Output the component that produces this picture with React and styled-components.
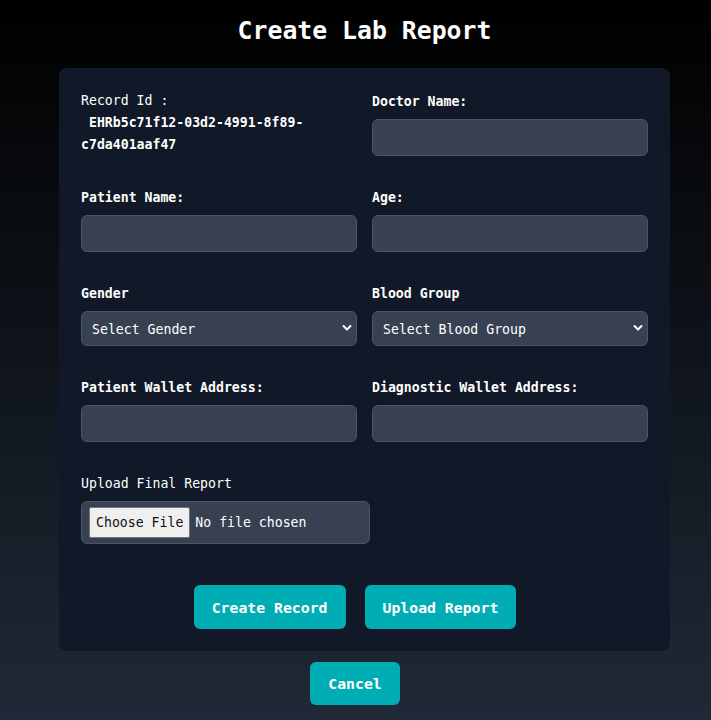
import React from "react";
import styled, { createGlobalStyle } from "styled-components";

const GlobalStyle = createGlobalStyle`
  html, body { margin: 0; padding: 0; }
  body {
    min-height: 720px;
    background: linear-gradient(to bottom, #000000 0%, #1f2937 100%);
    font-family: "DejaVu Sans Mono", "Liberation Mono", monospace;
    color: #ffffff;
  }
  * { box-sizing: border-box; }
`;

const Page = styled.div`
  min-height: 720px;
  padding: 13px 0 15px 18px;
  display: flex;
  flex-direction: column;
  align-items: center;
`;

const Title = styled.h1`
  margin: 0 0 19px;
  font-size: 24.8px;
  line-height: 36px;
  font-weight: 700;
  color: #ffffff;
`;

const Card = styled.form`
  width: 611px;
  padding: 22px;
  background: #111827;
  border-radius: 8px;
`;

const Grid = styled.div`
  display: grid;
  grid-template-columns: minmax(0, 1fr) minmax(0, 1fr);
  column-gap: 15px;
  row-gap: 30px;
`;

const Field = styled.div`
  display: flex;
  flex-direction: column;
  position: relative;
`;

const Label = styled.label`
  font-size: 13.2px;
  line-height: 20px;
  padding-top: 2px;
  font-weight: ${(p) => (p.$bold ? 700 : 400)};
  color: #ffffff;
  margin-bottom: 7px;
`;

const RecordText = styled.p`
  margin: 0;
  font-size: 13.2px;
  line-height: 22px;
  color: #ffffff;
`;

const RecordValue = styled.span`
  display: block;
  font-weight: 700;
`;

const TextInput = styled.input`
  height: 37px;
  width: 100%;
  background: #374151;
  border: 1px solid #4b5563;
  border-radius: 6px;
  color: #ffffff;
  font-family: inherit;
  font-size: 13.2px;
  padding: 0 10px;
  outline: none;
`;

const SelectWrap = styled.div`
  position: relative;
`;

const Select = styled.select`
  appearance: none;
  -webkit-appearance: none;
  width: 100%;
  height: 35px;
  background: #374151;
  border: 1px solid #4b5563;
  border-radius: 6px;
  color: #ffffff;
  font-family: "DejaVu Sans Mono", "Liberation Mono", monospace;
  font-size: 13.2px;
  padding: 1px 10px 0;
  outline: none;
`;

const Chevron = styled.svg`
  position: absolute;
  right: 5px;
  top: 13px;
  width: 10px;
  height: 8px;
  pointer-events: none;
`;

const FileInput = styled.input`
  width: 289px;
  height: 43px;
  background: #374151;
  border: 1px solid #4b5563;
  border-radius: 6px;
  color: #ffffff;
  font-family: "DejaVu Sans Mono", "Liberation Mono", monospace;
  font-size: 13.2px;
  padding: 5px 7px;

  &::file-selector-button {
    font-family: "DejaVu Sans Mono", "Liberation Mono", monospace;
    font-size: 13.2px;
    height: 31px;
    padding: 0 6px;
    margin-right: 5px;
    background: #efefef;
    color: #111111;
    border: 1px solid #767676;
    border-radius: 2px;
  }
`;

const ButtonRow = styled.div`
  display: flex;
  justify-content: center;
  margin-top: 41px;
`;

const Button = styled.button`
  height: ${(p) => p.$h || 44}px;
  padding: 0 18px;
  margin-right: 19px;
  margin-top: ${(p) => p.$mt || 0}px;
  background: #00adb5;
  color: #ffffff;
  border: none;
  border-radius: 6px;
  font-family: "DejaVu Sans Mono", "Liberation Mono", monospace;
  font-size: 14.8px;
  font-weight: 700;
  cursor: pointer;
`;

function ChevronIcon() {
  return (
    <Chevron viewBox="0 0 10 8">
      <path d="M1.5 2 L5 5.5 L8.5 2" fill="none" stroke="#ffffff" strokeWidth="2" strokeLinecap="round" strokeLinejoin="round" />
    </Chevron>
  );
}

export default function App() {
  return (
    <>
      <GlobalStyle />
      <Page>
        <Title>Create Lab Report</Title>
        <Card onSubmit={(e) => e.preventDefault()}>
          <Grid>
            <Field>
              <RecordText>
                Record Id :
                <RecordValue>{"\u00a0"}EHRb5c71f12-03d2-4991-8f89-c7da401aaf47</RecordValue>
              </RecordText>
            </Field>
            <Field>
              <Label $bold>Doctor Name:</Label>
              <TextInput type="text" />
            </Field>
            <Field>
              <Label $bold>Patient Name:</Label>
              <TextInput type="text" />
            </Field>
            <Field>
              <Label $bold>Age:</Label>
              <TextInput type="text" />
            </Field>
            <Field>
              <Label $bold>Gender</Label>
              <SelectWrap>
                <Select defaultValue="">
                  <option value="">Select Gender</option>
                  <option>Male</option>
                  <option>Female</option>
                  <option>Other</option>
                </Select>
                <ChevronIcon />
              </SelectWrap>
            </Field>
            <Field>
              <Label $bold>Blood Group</Label>
              <SelectWrap>
                <Select defaultValue="">
                  <option value="">Select Blood Group</option>
                  <option>A+</option>
                  <option>A-</option>
                  <option>B+</option>
                  <option>B-</option>
                  <option>AB+</option>
                  <option>AB-</option>
                  <option>O+</option>
                  <option>O-</option>
                </Select>
                <ChevronIcon />
              </SelectWrap>
            </Field>
            <Field>
              <Label $bold>Patient Wallet Address:</Label>
              <TextInput type="text" />
            </Field>
            <Field>
              <Label $bold>Diagnostic Wallet Address:</Label>
              <TextInput type="text" />
            </Field>
            <Field>
              <Label>Upload Final Report</Label>
              <FileInput type="file" />
            </Field>
          </Grid>
          <ButtonRow>
            <Button type="button">Create Record</Button>
            <Button type="button">Upload Report</Button>
          </ButtonRow>
        </Card>
        <Button type="button" $h={43} $mt={11}>Cancel</Button>
      </Page>
    </>
  );
}
